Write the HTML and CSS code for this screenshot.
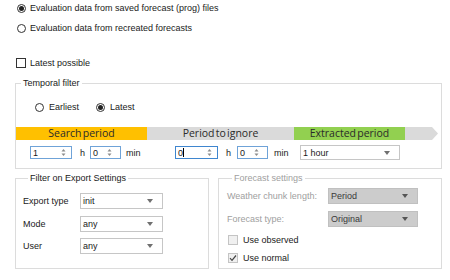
FILE: index.html
```html
<!DOCTYPE html>
<html>
<head>
<meta charset="utf-8">
<link rel="stylesheet" href="styles.css">
</head>
<body>
<div class="page">
  <div class="source">
    <label class="row"><span class="radio checked"></span><span>Evaluation data from saved forecast (prog) files</span></label>
    <label class="row"><span class="radio"></span><span>Evaluation data from recreated forecasts</span></label>
  </div>
  <label class="row latest"><span class="check"></span><span>Latest possible</span></label>

  <fieldset class="group temporal">
    <legend>Temporal filter</legend>
    <div class="mode">
      <label class="row mode-item"><span class="radio"></span><span>Earliest</span></label>
      <label class="row"><span class="radio checked"></span><span>Latest</span></label>
    </div>
    <div class="period-bar">
      <div class="seg search">Search period</div>
      <div class="seg ignore">Period to ignore</div>
      <div class="seg extracted">Extracted period</div>
      <div class="seg tail"></div>
    </div>
    <div class="spin-row">
      <div class="spin s1"><span class="val">1</span><svg class="arrows" width="5" height="9" viewBox="0 0 5 9"><polygon points="0.5,3.5 2.5,1 4.5,3.5"/><polygon points="0.5,5.5 2.5,8 4.5,5.5"/></svg></div>
      <span class="unit uh1">h</span>
      <div class="spin s2"><span class="val">0</span><svg class="arrows" width="5" height="9" viewBox="0 0 5 9"><polygon points="0.5,3.5 2.5,1 4.5,3.5"/><polygon points="0.5,5.5 2.5,8 4.5,5.5"/></svg></div>
      <span class="unit um1">min</span>
      <div class="spin s3 focused"><span class="val">0<span class="caret"></span></span><svg class="arrows" width="5" height="9" viewBox="0 0 5 9"><polygon points="0.5,3.5 2.5,1 4.5,3.5"/><polygon points="0.5,5.5 2.5,8 4.5,5.5"/></svg></div>
      <span class="unit uh2">h</span>
      <div class="spin s4"><span class="val">0</span><svg class="arrows" width="5" height="9" viewBox="0 0 5 9"><polygon points="0.5,3.5 2.5,1 4.5,3.5"/><polygon points="0.5,5.5 2.5,8 4.5,5.5"/></svg></div>
      <span class="unit um2">min</span>
      <div class="combo c-hour"><span class="val">1 hour</span><svg class="drop" width="6" height="4" viewBox="0 0 6 4"><polygon points="0,0 6,0 3,4"/></svg></div>
    </div>
  </fieldset>

  <div class="bottom">
    <fieldset class="group export">
      <legend>Filter on Export Settings</legend>
      <div class="field"><span class="flabel">Export type</span><div class="combo c-exp"><span class="val">init</span><svg class="drop" width="6" height="4" viewBox="0 0 6 4"><polygon points="0,0 6,0 3,4"/></svg></div></div>
      <div class="field"><span class="flabel">Mode</span><div class="combo c-exp"><span class="val">any</span><svg class="drop" width="6" height="4" viewBox="0 0 6 4"><polygon points="0,0 6,0 3,4"/></svg></div></div>
      <div class="field"><span class="flabel">User</span><div class="combo c-exp"><span class="val">any</span><svg class="drop" width="6" height="4" viewBox="0 0 6 4"><polygon points="0,0 6,0 3,4"/></svg></div></div>
    </fieldset>
    <fieldset class="group forecast">
      <legend>Forecast settings</legend>
      <div class="field ffield"><span class="flabel wide">Weather chunk length:</span><div class="combo disabled c-fc"><span class="val">Period</span><svg class="drop" width="6" height="4" viewBox="0 0 6 4"><polygon points="0,0 6,0 3,4"/></svg></div></div>
      <div class="field ffield"><span class="flabel wide">Forecast type:</span><div class="combo disabled c-fc"><span class="val">Original</span><svg class="drop" width="6" height="4" viewBox="0 0 6 4"><polygon points="0,0 6,0 3,4"/></svg></div></div>
      <label class="row dis-row obs"><span class="check disabled"></span><span>Use observed</span></label>
      <label class="row dis-row nrm"><span class="check disabled"><svg width="8" height="8" viewBox="0 0 8 8"><polyline points="1,4.2 3,6.3 7,1.5" fill="none" stroke="#444" stroke-width="1.2"/></svg></span><span>Use normal</span></label>
    </fieldset>
  </div>
</div>
</body>
</html>
```
FILE: styles.css
```css
* { box-sizing: border-box; }
html, body { margin: 0; padding: 0; background: #fff; }
body {
  font-family: "Liberation Sans", Arial, sans-serif;
  font-size: 9px;
  color: #1a1a1a;
}
.page { width: 450px; height: 280px; overflow: hidden; }

.row {
  display: flex;
  align-items: center;
  height: 14px;
  white-space: nowrap;
}
.radio {
  width: 9px; height: 9px;
  border: 1px solid #333;
  border-radius: 50%;
  margin-right: 4px;
  flex: none;
  display: flex; align-items: center; justify-content: center;
  background: #fff;
}
.radio.checked::after {
  content: "";
  width: 5px; height: 5px;
  border-radius: 50%;
  background: #222;
}
.check {
  width: 10px; height: 10px;
  border: 1px solid #333;
  background: #fff;
  margin-right: 4px;
  flex: none;
  display: flex; align-items: center; justify-content: center;
}
.check.disabled { border-color: #c4c4c4; background: #f0f0f0; }

.source { padding-left: 17px; display: flex; flex-direction: column; gap: 6px; padding-top: 1px; }
.latest { margin: 21px 0 0 16px; }

.group {
  margin: 0;
  padding: 0;
  border: 1px solid #dcdcdc;
  min-width: 0;
}
.group legend {
  margin-left: 5px;
  padding: 0 2px;
  line-height: 11px;
  font-size: 9px;
}

.temporal {
  margin: 8px 0 0 15px;
  width: 427px;
  padding-bottom: 8px;
}
.mode { display: flex; padding: 11px 0 0 19px; }
.mode-item { width: 61px; }
.mode .radio { margin-right: 5px; }

.period-bar {
  display: flex;
  height: 13px;
  margin-top: 13px;
  font-family: "Open Sans", "Liberation Sans", sans-serif;
  font-size: 10.5px;
  word-spacing: -1.5px;
  color: #2a2a2a;
}
.seg {
  display: flex; align-items: center; justify-content: center;
  line-height: 13px;
  white-space: nowrap;
}
.search { width: 131px; background: #ffc000; }
.ignore { width: 147px; background: #dadada; }
.extracted { width: 111px; background: #92d050; }
.tail {
  width: 33px;
  background: #dadada;
  clip-path: polygon(0 0, 27px 0, 100% 50%, 27px 100%, 0 100%);
}

.spin-row {
  display: flex;
  align-items: center;
  height: 15px;
  margin-top: 5px;
}
.spin {
  height: 13px;
  border: 1px solid #6fa3d8;
  display: flex;
  align-items: center;
  justify-content: space-between;
  padding: 0 5px 0 2px;
  background: #fff;
}
.spin.focused { border-color: #3f86cf; }
.arrows polygon { fill: #8c8c8c; }
.caret { display: inline-block; width: 1px; height: 9px; background: #000; vertical-align: -1px; margin-left: 0; }
.s1 { margin-left: 14px; width: 42px; }
.s2 { width: 31px; padding-right: 8px; }
.s3 { width: 43px; padding-right: 5px; }
.s4 { width: 31px; padding-right: 8px; }
.unit { flex: none; }
.uh1 { margin-left: 8px; width: 10px; }
.um1 { margin-left: 5px; width: 49px; }
.uh2 { margin-left: 8px; width: 11px; }
.um2 { margin-left: 6px; width: 26px; }

.combo {
  height: 15px;
  border: 1px solid #c6c6c6;
  background: #fff;
  display: flex;
  align-items: center;
  justify-content: space-between;
  padding: 0 9px 0 2px;
}
.drop polygon { fill: #707070; }
.c-hour { width: 100px; }

.bottom { display: flex; gap: 9px; margin: 4px 0 0 15px; align-items: stretch; }
.export { width: 194px; padding: 9px 0 13px 7px; }
.forecast { width: 224px; padding: 4px 0 3px 8px; color: #a0a0a0; }
.forecast legend { color: #a0a0a0; }

.field { display: flex; align-items: center; height: 16px; }
.export .field + .field { margin-top: 6.5px; }
.flabel { width: 57px; flex: none; }
.c-exp { width: 83px; height: 16px; }

.flabel.wide { width: 101px; }
.ffield + .ffield { margin-top: 7px; }
.combo.disabled {
  width: 90px; height: 16px;
  background: #cccccc;
  border-color: #c0c0c0;
  color: #3a3a3a;
}
.combo.disabled .drop polygon { fill: #555; }

.dis-row { padding-left: 1px; color: #1a1a1a; }
.dis-row .check { margin-right: 5px; }
.obs { margin-top: 6px; }
.nrm { margin-top: 4px; }
```
